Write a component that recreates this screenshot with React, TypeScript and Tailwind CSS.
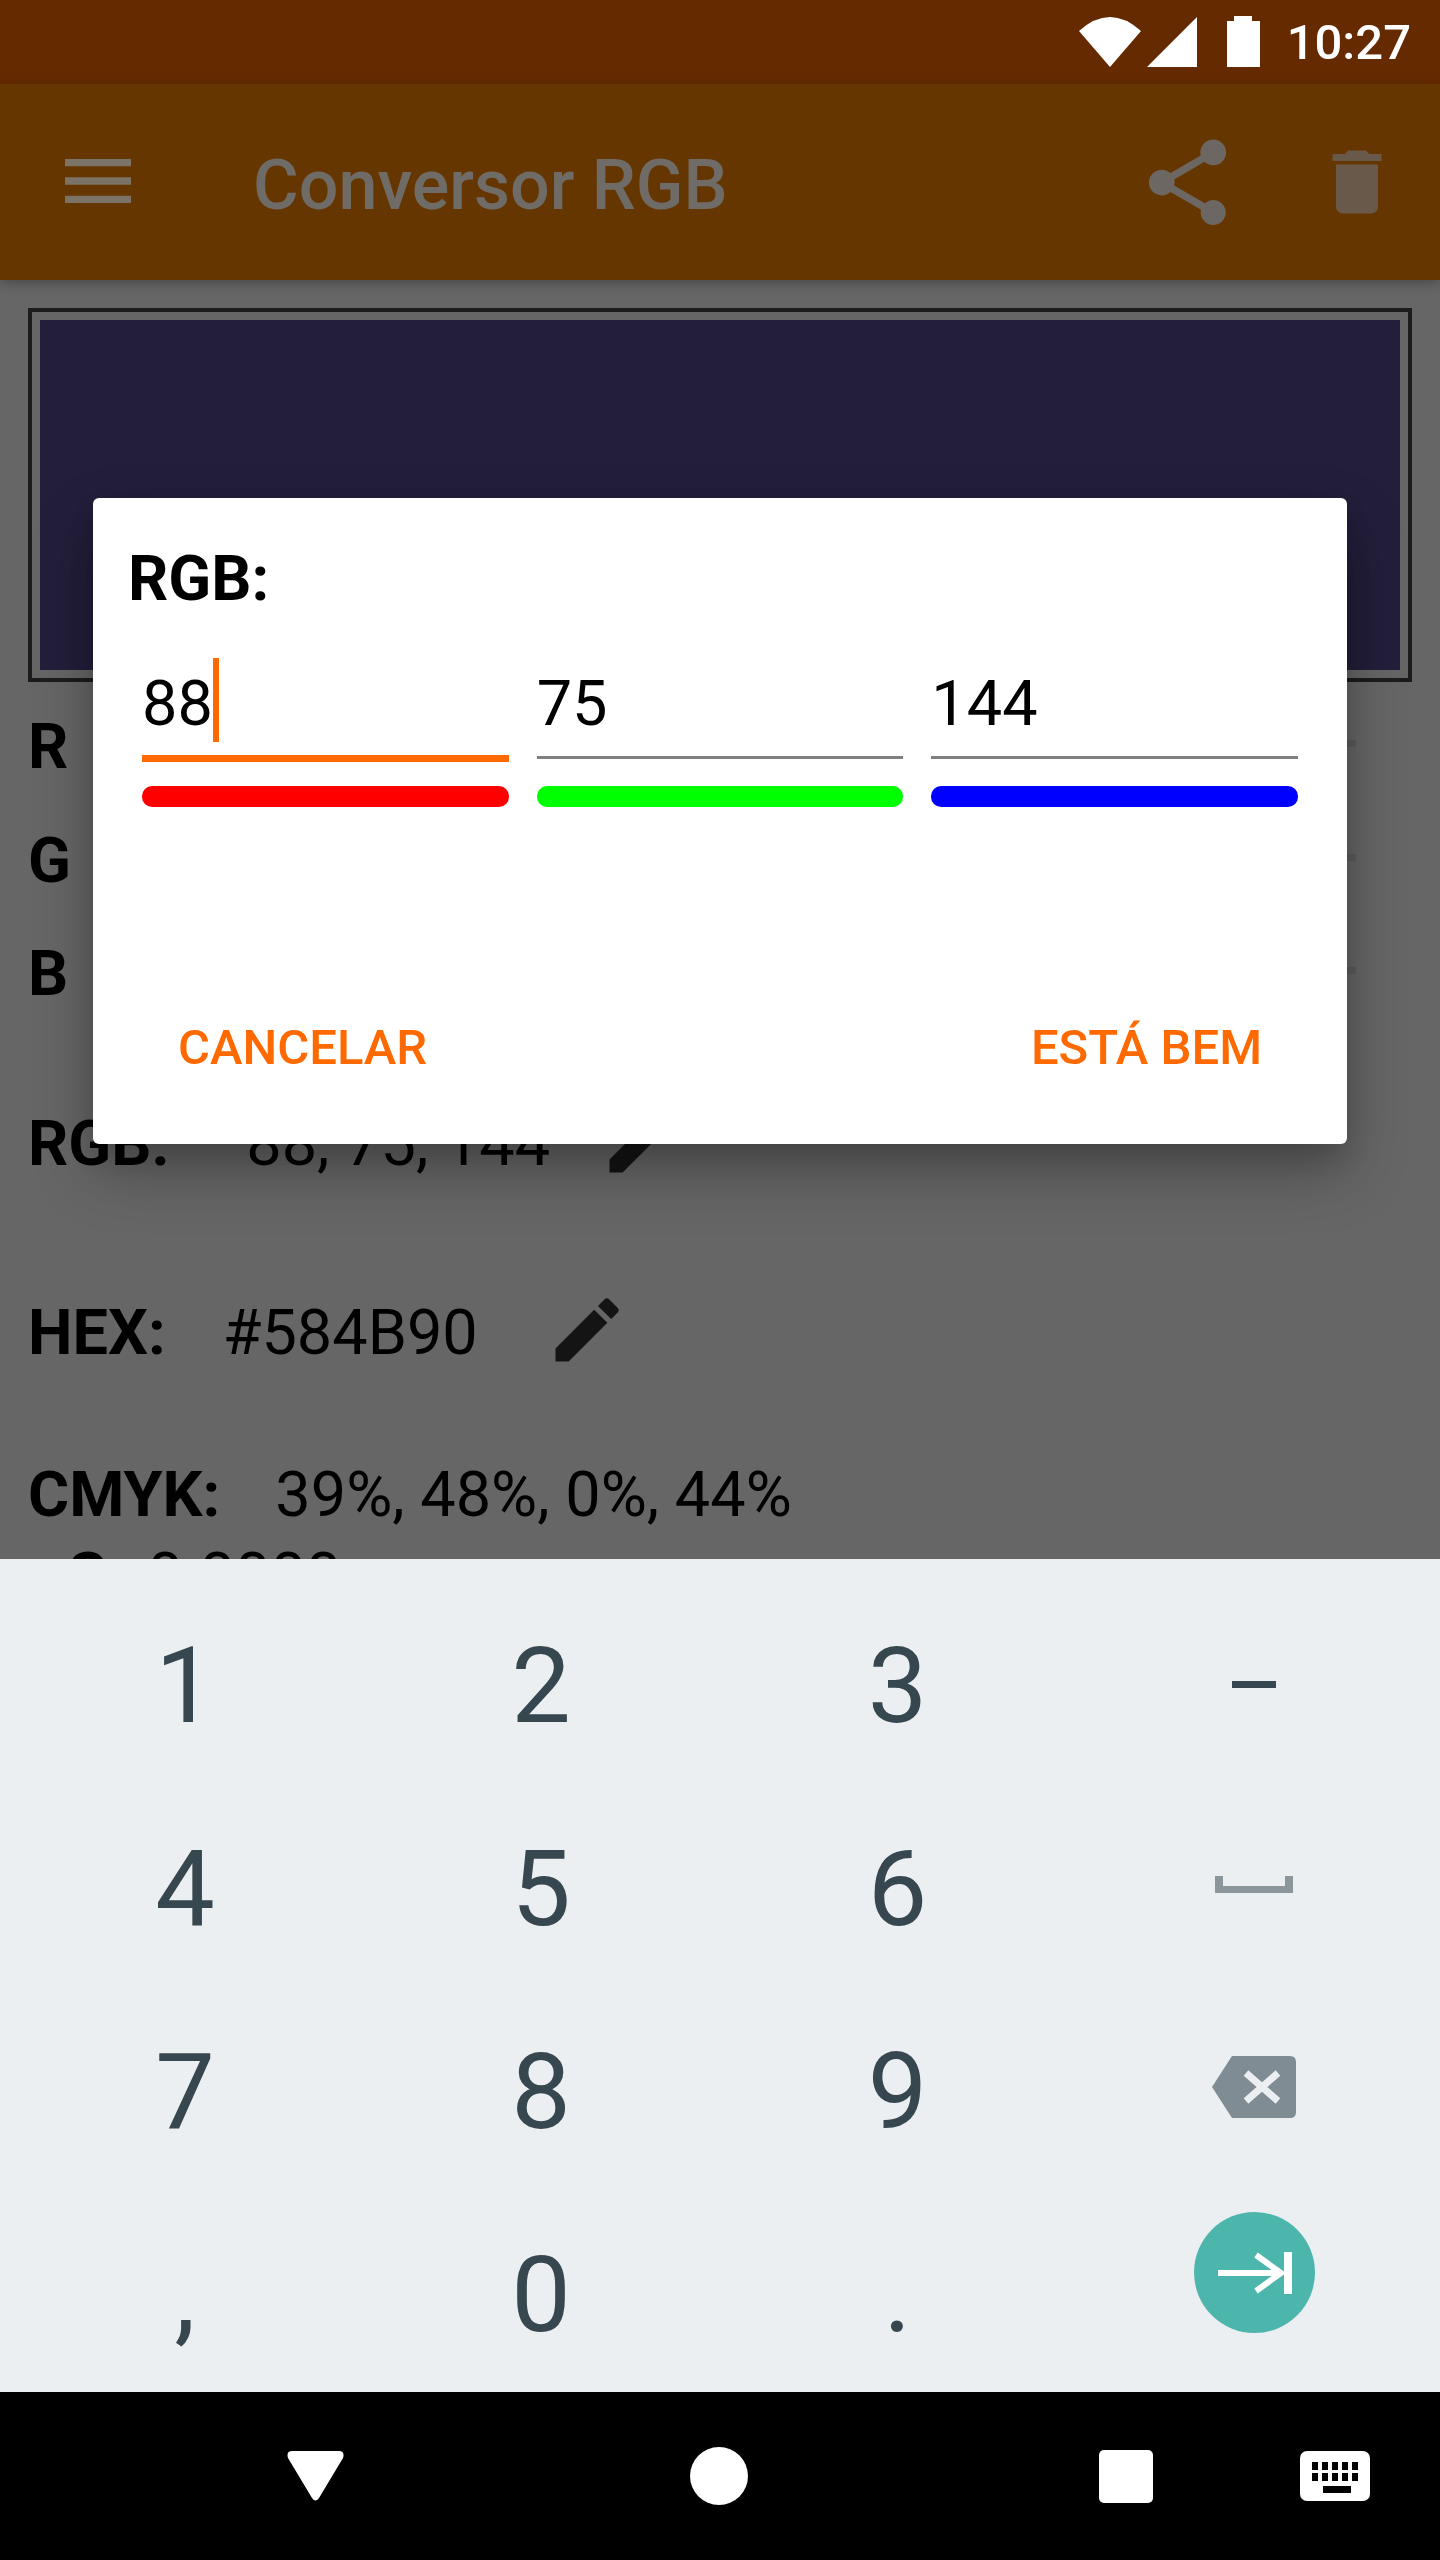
import { MdDelete, MdEdit, MdMenu, MdShare } from "react-icons/md";

const roboto = "font-['Roboto',sans-serif]";

const digitKeys = ["1", "2", "3", null, "4", "5", "6", null, "7", "8", "9", null, ",", "0", ".", null];

function StatusBar() {
  return (
    <div className="relative flex h-[84px] items-center justify-end bg-[#662a00] pr-[29px] text-white">
      <svg width="62" height="50" viewBox="0 0 62 50" className="mt-[-1px]" fill="#fff">
        <path d="M0 14 Q31 -14 62 14 L31 50 Z" />
      </svg>
      <svg width="50" height="50" viewBox="0 0 50 50" className="ml-[6px] mt-[-1px]" fill="#fff">
        <path d="M50 0 V50 H0 Z" />
      </svg>
      <svg width="33" height="51" viewBox="0 0 33 51" className="ml-[30px] mt-[-1px]" fill="#fff">
        <path d="M7 0 H25 V5 H33 V51 H0 V5 H7 Z" />
      </svg>
      <span className={`${roboto} ml-[27px] text-[49px] leading-none font-medium`}>10:27</span>
    </div>
  );
}

function AppBar() {
  return (
    <div className="relative z-10 flex h-[196px] items-center bg-[#663600] shadow-[0_3px_12px_rgba(0,0,0,0.3)]">
      <MdMenu className="ml-[54px] mt-[-3px] text-[#7b7466]" size={88} />
      <span className={`${roboto} ml-[111px] mt-[6px] text-[70px] leading-none font-medium text-[#6f6c68]`}>Conversor RGB</span>
      <MdShare className="ml-auto text-[#6c6763]" size={103} />
      <MdDelete className="ml-[76px] mr-[41px] text-[#68594b]" size={84} />
    </div>
  );
}

function SliderRow({ label }: { label: string }) {
  return (
    <div className="flex h-[113.5px] items-center">
      <span className="w-[100px] text-[63px] leading-none font-bold text-black">{label}</span>
      <div className="mt-[-6px] ml-auto mr-[84px] h-[7px] w-[1200px] bg-[#5c5c5c]" />
    </div>
  );
}

function ColorContent() {
  return (
    <div className={`${roboto} min-h-0 flex-1 overflow-hidden bg-[#666666] pl-[28px] text-black`}>
      <div className="mt-[28px] mr-[28px] border-4 border-[#1c1c1c] p-[8px]">
        <div className="h-[350px] bg-[#231e3a]" />
      </div>
      <div className="mt-[8px]">
        <SliderRow label="R" />
        <SliderRow label="G" />
        <SliderRow label="B" />
        <div className="mt-[63px] flex h-[100px] items-center text-[63px] leading-none">
          <span className="font-bold">RGB:</span>
          <span className="ml-[77px]">88, 75, 144</span>
          <MdEdit className="ml-[49px] mt-[-5px] text-[#141414]" size={84} />
        </div>
        <div className="mt-[89px] flex h-[100px] items-center text-[63px] leading-none">
          <span className="font-bold">HEX:</span>
          <span className="ml-[57px]">#584B90</span>
          <MdEdit className="ml-[67px] mt-[-5px] text-[#141414]" size={84} />
        </div>
        <div className="mt-[81px] flex h-[62px] items-center text-[63px] leading-none">
          <span className="font-bold">CMYK:</span>
          <span className="ml-[55px]">39%, 48%, 0%, 44%</span>
        </div>
        <div className="flex h-[100px] items-center pl-[40px] text-[63px] leading-none">
          <span className="font-bold">S:</span>
          <span className="ml-[23px]">0.0000</span>
        </div>
      </div>
    </div>
  );
}

function RgbField({ value, color, focused }: { value: string; color: string; focused?: boolean }) {
  return (
    <div>
      <div className={focused ? "flex h-[106px] items-start border-b-[7px] border-[#ff6a00]" : "flex h-[102.5px] items-start border-b-[3.5px] border-[#808080]"}>
        <span className="mt-[4px] text-[63px] leading-[88px] text-black">{value}</span>
        {focused ? <span className="mt-[2px] h-[84px] w-[6px] bg-[#ff6a00]" /> : null}
      </div>
      <div className={`h-[21px] rounded-[10px] ${focused ? "mt-[24px]" : "mt-[27.5px]"} ${color}`} />
    </div>
  );
}

function RgbDialog() {
  return (
    <div
      className={`${roboto} absolute top-[498px] left-[93px] h-[646px] w-[1254px] rounded-[6px] bg-white shadow-[0_28px_60px_rgba(0,0,0,0.28),0_12px_24px_rgba(0,0,0,0.12)]`}
    >
      <h2 className="pl-[35px] pt-[46px] text-[63px] leading-[70px] font-bold text-black">RGB:</h2>
      <div className="mt-[42px] grid grid-cols-3 gap-[28px] px-[49px]">
        <RgbField value="88" color="bg-[#ff0000]" focused />
        <RgbField value="75" color="bg-[#00ff00]" />
        <RgbField value="144" color="bg-[#0000ff]" />
      </div>
      <div className="mt-[211px] flex justify-between px-[85px] text-[49px] leading-[60px] font-medium text-[#ff6a00]">
        <button type="button">CANCELAR</button>
        <button type="button">ESTÁ BEM</button>
      </div>
    </div>
  );
}

function Keyboard() {
  return (
    <div className="relative h-[833px] bg-[#eceff1] pt-[25px] pl-[3px]">
      <div className={`${roboto} grid grid-cols-[364px_348px_365px_355px] auto-rows-[203px] items-center text-center text-[106px] leading-none text-[#37474f]`}>
        {digitKeys.map((key, index) =>
          key ? <span key={index}>{key}</span> : <span key={index} />,
        )}
      </div>
      <div className="absolute top-[122px] left-[1232px] h-[7px] w-[44px] bg-[#37474f]" />
      <svg className="absolute top-[317px] left-[1215px]" width="78" height="17" viewBox="0 0 78 17" fill="#8a969b">
        <path d="M0 0 H8 V10 H70 V0 H78 V17 H0 Z" />
      </svg>
      <svg className="absolute top-[497px] left-[1212px]" width="84" height="62" viewBox="0 0 84 62">
        <path d="M20 0 H78 Q84 0 84 6 V56 Q84 62 78 62 H20 L0 31 Z" fill="#7f8c93" />
        <path d="M34 17 L66 45 M66 17 L34 45" stroke="#eceff1" strokeWidth="7" />
      </svg>
      <div className="absolute top-[653px] left-[1194px] flex h-[121px] w-[121px] items-center justify-center rounded-full bg-[#4db6ac]">
        <svg width="74" height="42" viewBox="0 0 74 42" fill="none" stroke="#fff" strokeWidth="6">
          <path d="M0 21 H62 M38 3 L63 21 L38 39" />
          <path d="M70 0 V42" strokeWidth="8" />
        </svg>
      </div>
    </div>
  );
}

function NavBar() {
  return (
    <div className="flex h-[168px] items-center bg-black pl-[287px]">
      <svg width="57" height="50" viewBox="0 0 57 50" fill="#fff">
        <path d="M5 0 H52 Q58 0 56 7 L32 47 Q28.500 52 25 47 L1 7 Q-1 0 5 0 Z" />
      </svg>
      <div className="ml-[346px] h-[58px] w-[58px] rounded-full bg-white" />
      <div className="ml-[351px] h-[53px] w-[54px] rounded-[5px] bg-white" />
      <svg width="70" height="50" viewBox="0 0 70 50" className="ml-[147px]">
        <rect width="70" height="50" rx="7" fill="#fff" />
        <path
          d="M10 11h6v8h-6zM20 11h6v8h-6zM30 11h6v8h-6zM40 11h6v8h-6zM50 11h6v8h-6zM10 22h6v8h-6zM20 22h6v8h-6zM30 22h6v8h-6zM40 22h6v8h-6zM50 22h6v8h-6zM21 35h28v7h-28z"
          fill="#000"
          transform="translate(2 0)"
        />
      </svg>
    </div>
  );
}

export default function App() {
  return (
    <div className="relative flex h-[2560px] w-[1440px] flex-col overflow-hidden">
      <StatusBar />
      <AppBar />
      <ColorContent />
      <RgbDialog />
      <Keyboard />
      <NavBar />
    </div>
  );
}
